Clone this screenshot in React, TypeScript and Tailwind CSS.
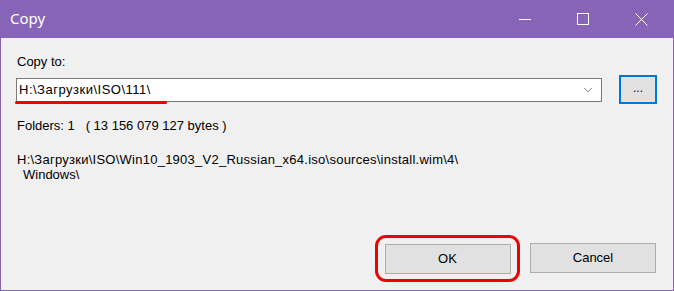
import { ChevronDown } from 'lucide-react';

const ui = { fontFamily: '"Liberation Sans", Arial, sans-serif' };

function TitleBar() {
    return (
        <div className="h-[38px] bg-[#8764b8] flex items-center text-white">
            <span className="pl-[10px] pb-[1px] text-[15px] flex-1" style={{ fontFamily: '"Noto Sans", "Open Sans", sans-serif' }}>Copy</span>
            {/* minimize / maximize / close */}
            <div className="flex h-full mr-[4px]">
                <div className="w-[58px] flex items-center justify-center">
                    <div className="w-[12px] h-px bg-white" />
                </div>
                <div className="w-[58px] flex items-center justify-center">
                    <div className="w-[12px] h-[12px] border border-white" />
                </div>
                <div className="w-[58px] flex items-center justify-center">
                    <svg width="13" height="13" viewBox="0 0 13 13">
                        <path d="M0.5 0.5L12.5 12.5M12.5 0.5L0.5 12.5" stroke="white" strokeWidth="1" />
                    </svg>
                </div>
            </div>
        </div>
    );
}

export default function App() {
    return (
        <div className="w-[674px] h-[291px] bg-[#8764b8] flex flex-col text-[13px] text-black" style={ui}>
            <TitleBar />
            <div className="flex-1 mx-px mb-px bg-[#f0f0f0] flex flex-col px-[16px] pt-[17px]">
                <div className="leading-[14px]">Copy to:</div>

                {/* Destination row */}
                <div className="flex items-center mt-[6px]">
                    <div className="relative w-[586px] h-[24px] bg-white border border-[#7a7a7a] flex items-center pl-[2px] ml-[-1px]">
                        <span className="flex-1 tracking-[0.5px]">H:\Загрузки\ISO\111\</span>
                        <ChevronDown className="w-[14px] h-[14px] mr-[6px] text-[#444]" strokeWidth={1.2} />
                        {/* red marker */}
                        <div className="absolute left-[-2px] top-[22px] w-[152px] h-[3px] bg-[#ee0000] rounded-full" />
                    </div>
                    <div className="ml-[17px] w-[38px] h-[29px] bg-[#e1e1e1] border-2 border-[#0078d7] flex items-center justify-center pb-[3px] text-[12px]">
                        ...
                    </div>
                </div>

                <div className="mt-[15px] leading-[14px] whitespace-pre">Folders: 1   ( 13 156 079 127 bytes )</div>

                <div className="mt-[19px] leading-[15px]">
                    <div className="tracking-[0.25px]">H:\Загрузки\ISO\Win10_1903_V2_Russian_x64.iso\sources\install.wim\4\</div>
                    <div className="pl-[6px]">Windows\</div>
                </div>

                {/* Buttons */}
                <div className="mt-auto mb-[8px] flex justify-end gap-[10px] mr-[1px]">
                    <div className="w-[145px] h-[47px] border-[3px] border-[#ee0000] rounded-[11px] flex items-center justify-center">
                        <div className="w-[126px] h-[30px] bg-[#e1e1e1] border border-[#adadad] flex items-center justify-center">
                            OK
                        </div>
                    </div>
                    <div className="w-[126px] h-[30px] mt-[8px] bg-[#e1e1e1] border border-[#adadad] flex items-center justify-center">
                        Cancel
                    </div>
                </div>
            </div>
        </div>
    );
}
